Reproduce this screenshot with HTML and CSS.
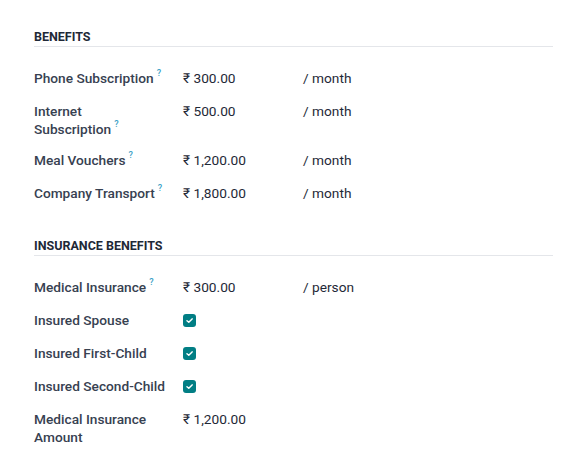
FILE: index.html
```html
<!DOCTYPE html>
<html lang="en">
<head>
<meta charset="utf-8">
<title>Benefits</title>
<link rel="stylesheet" href="styles.css">
</head>
<body>
<div class="sheet">
  <section class="group">
    <h3 class="group-title">Benefits</h3>
    <div class="fields">
      <div class="label">Phone Subscription<sup class="help">?</sup></div>
      <div class="value">₹ 300.00</div>
      <div class="unit">/ month</div>

      <div class="label">Internet Subscription<sup class="help">?</sup></div>
      <div class="value">₹ 500.00</div>
      <div class="unit">/ month</div>

      <div class="label">Meal Vouchers<sup class="help">?</sup></div>
      <div class="value">₹ 1,200.00</div>
      <div class="unit">/ month</div>

      <div class="label">Company Transport<sup class="help">?</sup></div>
      <div class="value">₹ 1,800.00</div>
      <div class="unit">/ month</div>
    </div>
  </section>

  <section class="group">
    <h3 class="group-title">Insurance Benefits</h3>
    <div class="fields">
      <div class="label">Medical Insurance<sup class="help">?</sup></div>
      <div class="value">₹ 300.00</div>
      <div class="unit">/ person</div>

      <div class="label">Insured Spouse</div>
      <div class="value"><span class="check"><svg viewBox="0 0 10 10" width="9" height="9"><path d="M2.2 5.2 L4.2 7 L7.9 3.2" fill="none" stroke="#fff" stroke-width="1.6" stroke-linecap="round" stroke-linejoin="round"/></svg></span></div>
      <div class="unit"></div>

      <div class="label">Insured First-Child</div>
      <div class="value"><span class="check"><svg viewBox="0 0 10 10" width="9" height="9"><path d="M2.2 5.2 L4.2 7 L7.9 3.2" fill="none" stroke="#fff" stroke-width="1.6" stroke-linecap="round" stroke-linejoin="round"/></svg></span></div>
      <div class="unit"></div>

      <div class="label">Insured Second-Child</div>
      <div class="value"><span class="check"><svg viewBox="0 0 10 10" width="9" height="9"><path d="M2.2 5.2 L4.2 7 L7.9 3.2" fill="none" stroke="#fff" stroke-width="1.6" stroke-linecap="round" stroke-linejoin="round"/></svg></span></div>
      <div class="unit"></div>

      <div class="label">Medical Insurance Amount</div>
      <div class="value">₹ 1,200.00</div>
      <div class="unit"></div>
    </div>
  </section>
</div>
</body>
</html>
```
FILE: styles.css
```css
html, body {
  margin: 0;
  padding: 0;
  background: #ffffff;
}

body {
  font-family: Roboto, "Noto Sans", sans-serif;
  font-size: 13.7px;
  line-height: 18px;
  color: #374151;
}

.sheet {
  padding: 29px 15px 0 34px;
}

.group {
  margin-bottom: 21px;
}

.group-title {
  margin: 0;
  padding-bottom: 2px;
  font-size: 12.5px;
  line-height: 15px;
  font-weight: 700;
  text-transform: uppercase;
  color: #1f2937;
  border-bottom: 1px solid #e4e6ea;
}

.fields {
  display: grid;
  grid-template-columns: 149px 120px 1fr;
  padding-top: 22px;
}

.label {
  font-weight: 500;
  color: #374151;
  padding-right: 15px;
  padding-bottom: 13px;
}

.value,
.unit {
  color: #1f2937;
  padding-bottom: 15px;
}

.help {
  font-size: 9px;
  font-weight: 500;
  color: #3a9fc6;
  margin-left: 3px;
  vertical-align: top;
  line-height: 10px;
  position: relative;
  top: -1px;
}

.check {
  display: inline-flex;
  align-items: center;
  justify-content: center;
  width: 13px;
  height: 13px;
  border-radius: 3px;
  background: #017e84;
  vertical-align: middle;
  margin-top: -2px;
}
```
